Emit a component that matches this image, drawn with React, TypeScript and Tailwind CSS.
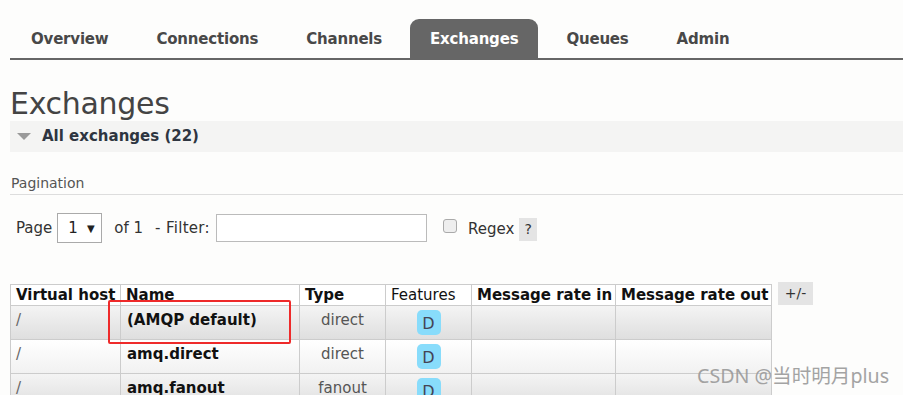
import React from "react";

const tabs = ["Overview", "Connections", "Channels", "Exchanges", "Queues", "Admin"];

const rows = [
  { vhost: "/", name: "(AMQP default)", type: "direct", dark: true },
  { vhost: "/", name: "amq.direct", type: "direct", dark: false },
  { vhost: "/", name: "amq.fanout", type: "fanout", dark: true },
];

export default function App() {
  return (
    <div
      className="relative w-[903px] h-[395px] overflow-hidden bg-[#fdfdfc] text-[#333]"
      style={{ fontFamily: '"DejaVu Sans", Verdana, sans-serif' }}
    >
      {/* Tabs */}
      <div className="pt-[19px] ml-[10px] pl-[1px] border-b-[2px] border-[#666] flex items-end gap-[8px]">
        {tabs.map((t) => (
          <div
            key={t}
            className={
              t === "Exchanges"
                ? "h-[39px] px-[20px] pt-[1px] flex items-center bg-[#666] text-white rounded-t-[9px] text-[15px] font-bold tracking-[-0.2px]"
                : "h-[39px] px-[20px] pt-[1px] flex items-center text-[#484848] text-[15px] font-bold tracking-[-0.2px]"
            }
          >
            {t}
          </div>
        ))}
      </div>

      {/* Title */}
      <h1 className="ml-[10px] mt-[27px] text-[30px] leading-[34px] text-[#444] font-normal tracking-[-0.3px]">
        Exchanges
      </h1>

      {/* Section bar */}
      <div className="ml-[10px] h-[31px] bg-[#f4f4f3] flex items-center">
        <svg width="14" height="8" viewBox="0 0 14 8" className="ml-[7px] mr-[11px] mt-[1px]">
          <polygon points="0,0 14,0 7,7" fill="#9a9a9a" />
        </svg>
        <span className="text-[15px] font-bold text-[#2e3540]">All exchanges (22)</span>
      </div>

      {/* Pagination */}
      <div className="ml-[10px] mt-[22px] pb-[2px] border-b border-[#ddd] text-[14px] text-[#555] leading-[18px] pl-[1px]">
        Pagination
      </div>

      <div className="ml-[16px] mt-[18px] flex items-center text-[15px] text-[#333] h-[30px]">
        <span>Page</span>
        <div className="ml-[5px] w-[45px] h-[30px] border border-[#aaa] bg-white flex items-center pl-[10px] text-[15px] text-[#222]">
          1<span className="ml-[9px] text-[10px]">▼</span>
        </div>
        <span className="ml-[12px]">of 1</span>
        <span className="ml-[12px] tracking-[0.3px]">- Filter:</span>
        <div className="ml-[6px] w-[211px] h-[28px] border border-[#bbb] bg-white" />
        <div className="ml-[16px] w-[14px] h-[14px] border border-[#aaa] rounded-[3px] bg-[#eee] -mt-[4px]" />
        <span className="ml-[11px] mt-[3px]">Regex</span>
        <span className="ml-[5px] mt-[3px] w-[18px] h-[23px] bg-[#e4e4e4] flex items-center justify-center text-[14px]">?</span>
      </div>

      {/* Table */}
      <div className="ml-[10px] mt-[41px] flex items-start">
        <table className="border-collapse text-[15px] w-[761px]" style={{ tableLayout: "fixed" }}>
          <colgroup>
            <col className="w-[110px]" />
            <col className="w-[179px]" />
            <col className="w-[86px]" />
            <col className="w-[86px]" />
            <col className="w-[144px]" />
            <col className="w-[156px]" />
          </colgroup>
          <thead>
            <tr className="h-[21px] bg-white">
              <th className="border border-[#ccc] text-left font-bold px-[5px] whitespace-nowrap overflow-hidden text-[#111] leading-[19px] pt-[1px]">Virtual host</th>
              <th className="border border-[#ccc] text-left font-bold px-[5px] whitespace-nowrap overflow-hidden text-[#111] leading-[19px] pt-[1px]">Name</th>
              <th className="border border-[#ccc] text-left font-bold px-[5px] whitespace-nowrap overflow-hidden text-[#111] leading-[19px] pt-[1px]">Type</th>
              <th className="border border-[#ccc] text-left font-normal px-[5px] whitespace-nowrap overflow-hidden text-[#111] leading-[19px] pt-[1px]">Features</th>
              <th className="border border-[#ccc] text-left font-bold px-[5px] whitespace-nowrap overflow-hidden text-[#111] leading-[19px] pt-[1px]">Message rate in</th>
              <th className="border border-[#ccc] text-left font-bold px-[5px] whitespace-nowrap overflow-hidden text-[#111] leading-[19px] pt-[1px]">Message rate out</th>
            </tr>
          </thead>
          <tbody>
            {rows.map((r, i) => (
              <tr
                key={i}
                className={
                  r.dark
                    ? "h-[34px] bg-gradient-to-b from-[#f4f4f4] to-[#dedede]"
                    : "h-[34px] bg-gradient-to-b from-[#ffffff] to-[#f1f1f1]"
                }
              >
                <td className="border border-[#ccc] px-[5px] text-[#666] align-top pt-[3px]">{r.vhost}</td>
                <td className="border border-[#ccc] px-[6px] font-bold text-[#111] align-top pt-[3px]">{r.name}</td>
                <td className="border border-[#ccc] text-center text-[#555] align-top pt-[3px]">{r.type}</td>
                <td className="border border-[#ccc] text-center align-middle">
                  <span className="inline-flex items-center justify-center w-[24px] h-[25px] rounded-[5px] bg-[#88dcfb] text-[#445] text-[16px] pt-[2px]">
                    D
                  </span>
                </td>
                <td className="border border-[#ccc]" />
                <td className="border border-[#ccc]" />
              </tr>
            ))}
          </tbody>
        </table>
        <div className="ml-[6px] -mt-[2px] w-[35px] h-[23px] bg-[#e4e4e4] flex items-center justify-center text-[14px] text-[#333]">
          +/-
        </div>
      </div>

      {/* Red highlight overlay */}
      <div className="absolute left-[108px] top-[300px] w-[183px] h-[44px] border-[2px] border-[#ee2a2a] rounded-[2px]" />

      {/* Watermark */}
      <div
        className="absolute left-[697px] top-[361px] text-[19.6px] text-[#9a9a9a] opacity-90"
        style={{ fontFamily: '"Noto Sans", "Noto Sans CJK SC", sans-serif' }}
      >
        CSDN @当时明月plus
      </div>
    </div>
  );
}
